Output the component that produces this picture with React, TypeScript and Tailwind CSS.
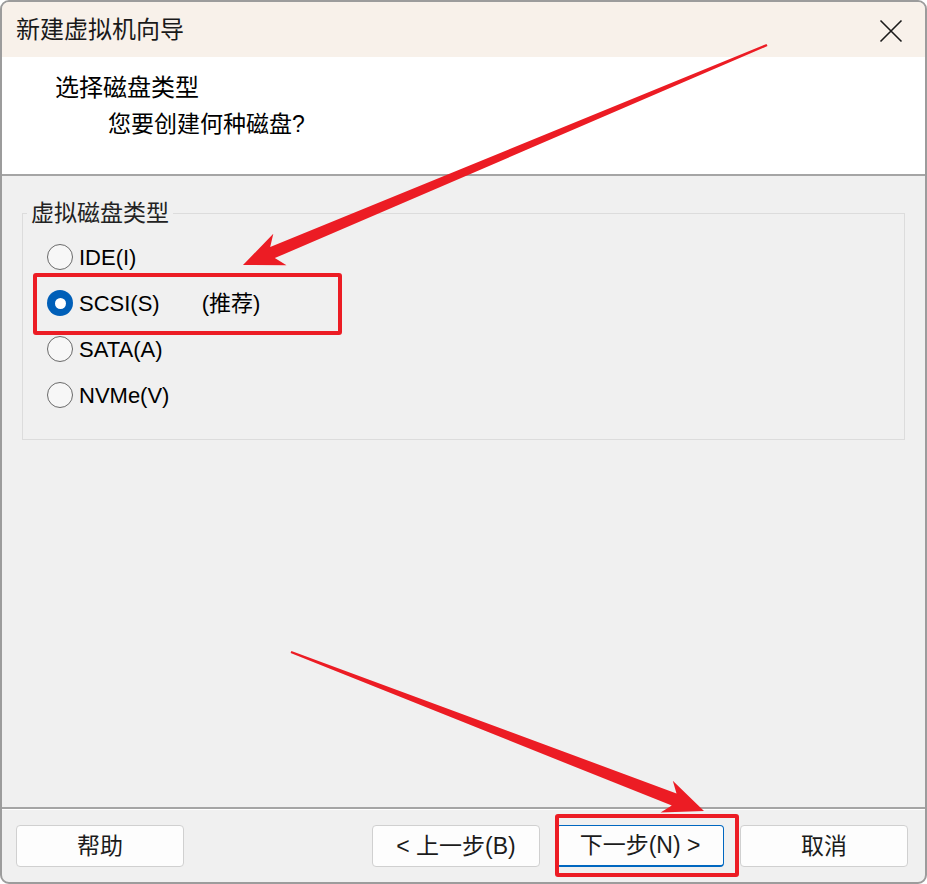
import React from 'react';

type Pt = [number, number];

// tapered annotation arrow, computed from tail and tip
function arrowPoints(tail: Pt, tip: Pt, tailW = 1.2, neckW = 5.5, headLen = 38, headW = 16, notch = 8) {
  const dx = tip[0] - tail[0];
  const dy = tip[1] - tail[1];
  const len = Math.hypot(dx, dy);
  const ux = dx / len;
  const uy = dy / len;
  const nx = -uy;
  const ny = ux;
  const bx = tip[0] - ux * headLen;
  const by = tip[1] - uy * headLen;
  const kx = tip[0] - ux * (headLen - notch);
  const ky = tip[1] - uy * (headLen - notch);
  const pts: Pt[] = [
    [tail[0] + nx * tailW, tail[1] + ny * tailW],
    [kx + nx * neckW, ky + ny * neckW],
    [bx + nx * headW, by + ny * headW],
    tip,
    [bx - nx * headW, by - ny * headW],
    [kx - nx * neckW, ky - ny * neckW],
    [tail[0] - nx * tailW, tail[1] - ny * tailW],
  ];
  return pts.map((p) => `${p[0].toFixed(1)},${p[1].toFixed(1)}`).join(' ');
}

const options = [
  { label: 'IDE(I)', checked: false },
  { label: 'SCSI(S)', checked: true, note: '(推荐)' },
  { label: 'SATA(A)', checked: false },
  { label: 'NVMe(V)', checked: false },
];

function Radio({ checked }: { checked: boolean }) {
  if (checked) {
    return (
      <span className="w-[26px] h-[26px] rounded-full bg-[#005fb8] flex items-center justify-center shrink-0">
        <span className="w-[11px] h-[11px] rounded-full bg-white" />
      </span>
    );
  }
  return <span className="w-[26px] h-[26px] rounded-full border-[1.5px] border-[#6a6a6a] bg-[#f7f7f7] shrink-0" />;
}

function Btn({ children, primary }: { children: React.ReactNode; primary?: boolean }) {
  return (
    <button
      className={
        primary
          ? 'w-[168px] h-[42px] rounded-[4px] bg-[#fdfdfd] border border-[#0067c0] border-b-2 text-[23px] text-[#1b1b1b]'
          : 'w-[168px] h-[42px] rounded-[4px] bg-[#fdfdfd] border border-[#d0d0d0] text-[23px] text-[#1b1b1b]'
      }
    >
      {children}
    </button>
  );
}

export default function App() {
  return (
    <div className="w-[927px] h-[884px] bg-white relative font-['Liberation_Sans','Noto_Sans_CJK_SC',sans-serif] text-[#1a1a1a]">
      <div className="w-full h-full border-2 border-[#9c9c9c] rounded-[9px] overflow-hidden flex flex-col bg-[#f0f0f0]">
        {/* title bar */}
        <div className="h-[55px] bg-[#f8f1ea] flex items-center justify-between pl-[14px] pr-[22px] shrink-0">
          <span className="text-[24px] leading-none">新建虚拟机向导</span>
          <svg width="24" height="24" viewBox="0 0 24 24" className="mt-[2px]">
            <path d="M1.5 1.5 L22.5 22.5 M22.5 1.5 L1.5 22.5" stroke="#1a1a1a" strokeWidth="1.6" />
          </svg>
        </div>

        {/* header */}
        <div className="h-[119px] bg-white border-b-2 border-[#a5a5a5] pl-[53px] pt-[16px] shrink-0">
          <div className="text-[24px] leading-[30px] text-black">选择磁盘类型</div>
          <div className="text-[23px] leading-[30px] mt-[6px] pl-[53px] text-black">您要创建何种磁盘?</div>
        </div>

        {/* body */}
        <div className="flex-1 px-[20px] pt-[24px]">
          <fieldset className="border border-[#dcdcdc] h-[240px] pl-[24px] pt-[8px]">
            <legend className="-ml-[20px] px-[4px] text-[23px] leading-[26px] text-[#222]">虚拟磁盘类型</legend>
            <div className="flex flex-col">
              {options.map((o) => (
                <div key={o.label} className="h-[46px] flex items-center gap-[6px]">
                  <Radio checked={o.checked} />
                  <span className="text-[22px] text-black">{o.label}</span>
                  {o.note && <span className="text-[22px] text-black ml-[36px]">{o.note}</span>}
                </div>
              ))}
            </div>
          </fieldset>
        </div>

        {/* footer */}
        <div className="border-t-2 border-[#a5a5a5] shrink-0">
          <div className="border-t border-white h-[73px] flex items-start pt-[15px] pl-[14px] pr-[17px]">
            <Btn>帮助</Btn>
            <div className="flex-1" />
            <div className="flex gap-[16px]">
              <Btn>&lt; 上一步(B)</Btn>
              <Btn primary>下一步(N) &gt;</Btn>
              <Btn>取消</Btn>
            </div>
          </div>
        </div>
      </div>

      {/* annotations */}
      <div className="absolute left-[33px] top-[273px] w-[309px] h-[62px] border-4 border-[#ec1c24] rounded-[3px] pointer-events-none" />
      <div className="absolute left-[555px] top-[814px] w-[184px] h-[63px] border-4 border-[#ec1c24] rounded-[3px] pointer-events-none" />
      <svg className="absolute inset-0 pointer-events-none" width="927" height="884" viewBox="0 0 927 884">
        <polygon points={arrowPoints([767, 45], [243, 265], 1.2, 6, 40, 17, 8)} fill="#ec1c24" />
        <polygon points={arrowPoints([291, 652], [704, 811], 1.2, 6.5, 40, 17, 8)} fill="#ec1c24" />
      </svg>
    </div>
  );
}
